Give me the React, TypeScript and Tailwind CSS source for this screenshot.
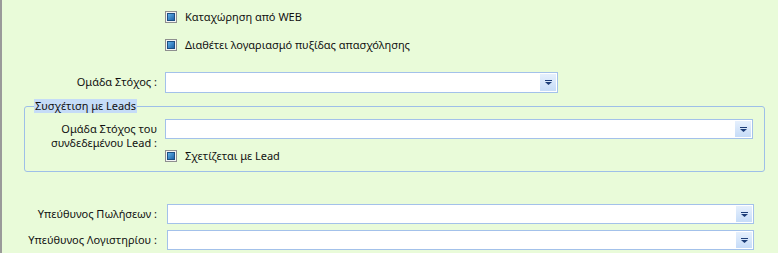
import React from "react";

function CheckBox() {
    return (
        <div className="flex h-[12px] w-[12px] items-center justify-center border border-[#8e8f8f] bg-[#f4f4f4]">
            <div className="h-[8px] w-[8px] border border-[#1d4f82] bg-gradient-to-br from-[#5fb0e8] to-[#1f64a8]" />
        </div>
    );
}

function CheckRow({ label, className = "" }: { label: string; className?: string }) {
    return (
        <div className={`flex items-center gap-[8px] ${className}`}>
            <CheckBox />
            <span className="leading-[12px]">{label}</span>
        </div>
    );
}

function Combo({ width, height = 20 }: { width: number; height?: number }) {
    return (
        <div
            className="flex shrink-0 items-stretch justify-end border border-[#a3c1ea] bg-white p-[1px]"
            style={{ width, height }}
        >
            <div className="flex w-[16px] items-center justify-center bg-gradient-to-b from-[#e6f0fd] to-[#c6dcf8]">
                <svg width="7" height="5" viewBox="0 0 7 5">
                    <rect x="0" y="0" width="7" height="1" fill="#1c3d78" />
                    <polygon points="0,2 7,2 3.5,5" fill="#1c3d78" />
                </svg>
            </div>
        </div>
    );
}

export default function App() {
    return (
        <div className="h-[253px] w-[778px] overflow-hidden border-l-2 border-[#9a9a9a] bg-[#e9fbd9] font-['Noto_Sans',sans-serif] text-[11px] text-[#111]">
            <div className="pl-[163px] pt-[11px]">
                <CheckRow label="Καταχώρηση από WEB" />
                <CheckRow label="Διαθέτει λογαριασμό πυξίδας απασχόλησης" className="mt-[16px]" />
            </div>

            <div className="mt-[21px] flex items-center gap-[8px]">
                <div className="w-[155px] text-right">Ομάδα Στόχος :</div>
                <Combo width={393} height={21} />
            </div>

            <fieldset className="ml-[22px] mt-[6px] w-[741px] rounded-[3px] border border-[#9ebfe8] pb-[9px]">
                <legend className="ml-[9px] bg-[#c5dcf7] px-[1px] leading-[14px]">Συσχέτιση με Leads</legend>
                <div className="mt-[6px] flex items-start gap-[8px]">
                    <div className="mt-[3px] w-[132px] text-right leading-[14px]">
                        <div>Ομάδα Στόχος του</div>
                        <div>συνδεδεμένου Lead :</div>
                    </div>
                    <Combo width={588} />
                </div>
                <CheckRow label="Σχετίζεται με Lead" className="ml-[140px]" />
            </fieldset>

            <div className="mt-[32px] flex items-center gap-[10px]">
                <div className="w-[155px] text-right">Υπεύθυνος Πωλήσεων :</div>
                <Combo width={587} />
            </div>
            <div className="mt-[6px] flex items-center gap-[10px]">
                <div className="w-[155px] text-right">Υπεύθυνος Λογιστηρίου :</div>
                <Combo width={587} />
            </div>
        </div>
    );
}
